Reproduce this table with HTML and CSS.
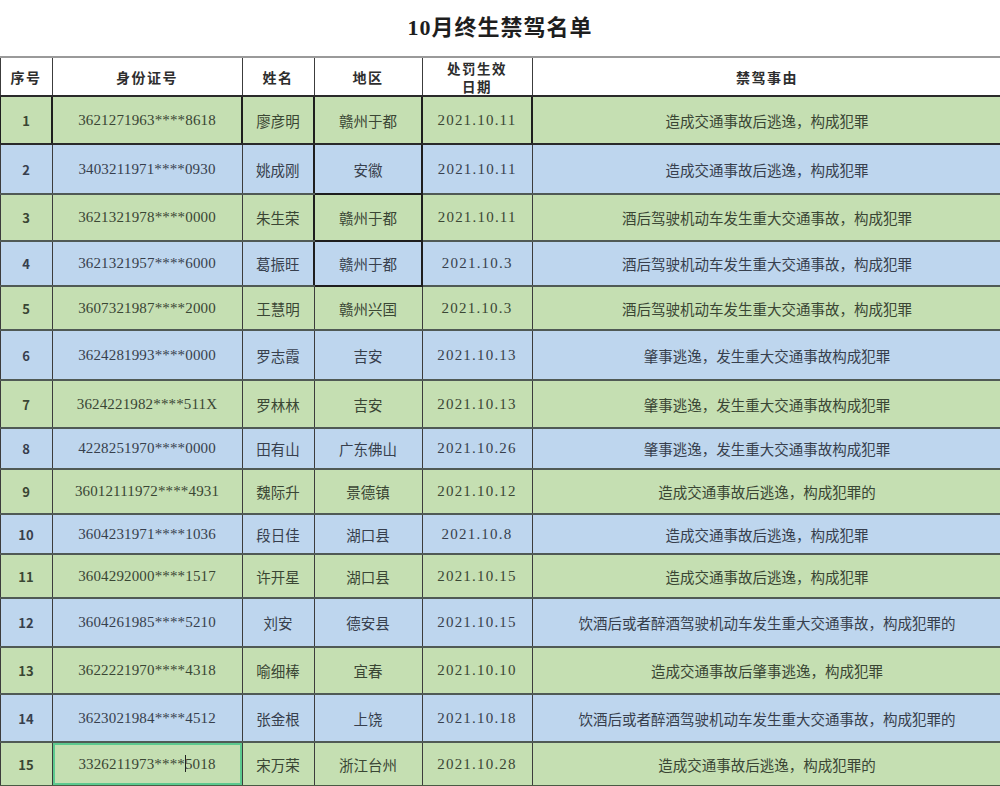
FILE: index.html
```html
<!DOCTYPE html>
<html lang="zh-CN">
<head>
<meta charset="utf-8">
<title>10月终生禁驾名单</title>
<link rel="stylesheet" href="styles.css">
</head>
<body>
<div class="page">
  <h1 class="title">10月终生禁驾名单</h1>
  <table class="list">
    <colgroup>
      <col class="c-no"><col class="c-id"><col class="c-name"><col class="c-area"><col class="c-date"><col class="c-reason">
    </colgroup>
    <thead>
      <tr class="h39">
        <th>序号</th><th>身份证号</th><th>姓名</th><th>地区</th><th class="two">处罚生效<br>日期</th><th>禁驾事由</th>
      </tr>
    </thead>
    <tbody>
      <tr class="g h48 first"><td class="no">1</td><td class="id">3621271963****8618</td><td class="cn">廖彦明</td><td class="cn">赣州于都</td><td class="dt">2021.10.11</td><td class="cn">造成交通事故后逃逸，构成犯罪</td></tr>
      <tr class="b h50"><td class="no">2</td><td class="id">3403211971****0930</td><td class="cn">姚成刚</td><td class="cn box">安徽</td><td class="dt">2021.10.11</td><td class="cn">造成交通事故后逃逸，构成犯罪</td></tr>
      <tr class="g h47"><td class="no">3</td><td class="id">3621321978****0000</td><td class="cn">朱生荣</td><td class="cn box">赣州于都</td><td class="dt">2021.10.11</td><td class="cn">酒后驾驶机动车发生重大交通事故，构成犯罪</td></tr>
      <tr class="b h45"><td class="no">4</td><td class="id">3621321957****6000</td><td class="cn">葛振旺</td><td class="cn box">赣州于都</td><td class="dt">2021.10.3</td><td class="cn">酒后驾驶机动车发生重大交通事故，构成犯罪</td></tr>
      <tr class="g h44"><td class="no">5</td><td class="id">3607321987****2000</td><td class="cn">王慧明</td><td class="cn">赣州兴国</td><td class="dt">2021.10.3</td><td class="cn">酒后驾驶机动车发生重大交通事故，构成犯罪</td></tr>
      <tr class="b h50"><td class="no">6</td><td class="id">3624281993****0000</td><td class="cn">罗志霞</td><td class="cn">吉安</td><td class="dt">2021.10.13</td><td class="cn">肇事逃逸，发生重大交通事故构成犯罪</td></tr>
      <tr class="g h48"><td class="no">7</td><td class="id">3624221982****511X</td><td class="cn">罗林林</td><td class="cn">吉安</td><td class="dt">2021.10.13</td><td class="cn">肇事逃逸，发生重大交通事故构成犯罪</td></tr>
      <tr class="b h41"><td class="no">8</td><td class="id">4228251970****0000</td><td class="cn">田有山</td><td class="cn">广东佛山</td><td class="dt">2021.10.26</td><td class="cn">肇事逃逸，发生重大交通事故构成犯罪</td></tr>
      <tr class="g h45"><td class="no">9</td><td class="id">36012111972****4931</td><td class="cn">魏际升</td><td class="cn">景德镇</td><td class="dt">2021.10.12</td><td class="cn">造成交通事故后逃逸，构成犯罪的</td></tr>
      <tr class="b h40"><td class="no">10</td><td class="id">3604231971****1036</td><td class="cn">段日佳</td><td class="cn">湖口县</td><td class="dt">2021.10.8</td><td class="cn">造成交通事故后逃逸，构成犯罪</td></tr>
      <tr class="g h44"><td class="no">11</td><td class="id">3604292000****1517</td><td class="cn">许开星</td><td class="cn">湖口县</td><td class="dt">2021.10.15</td><td class="cn">造成交通事故后逃逸，构成犯罪</td></tr>
      <tr class="b h49"><td class="no">12</td><td class="id">3604261985****5210</td><td class="cn">刘安</td><td class="cn">德安县</td><td class="dt">2021.10.15</td><td class="cn">饮酒后或者醉酒驾驶机动车发生重大交通事故，构成犯罪的</td></tr>
      <tr class="g h47"><td class="no">13</td><td class="id">3622221970****4318</td><td class="cn">喻细棒</td><td class="cn">宜春</td><td class="dt">2021.10.10</td><td class="cn">造成交通事故后肇事逃逸，构成犯罪</td></tr>
      <tr class="b h48"><td class="no">14</td><td class="id">3623021984****4512</td><td class="cn">张金根</td><td class="cn">上饶</td><td class="dt">2021.10.18</td><td class="cn">饮酒后或者醉酒驾驶机动车发生重大交通事故，构成犯罪的</td></tr>
      <tr class="g h44 last"><td class="no">15</td><td class="id sel">3326211973****<span class="caret"></span>5018</td><td class="cn">宋万荣</td><td class="cn">浙江台州</td><td class="dt">2021.10.28</td><td class="cn">造成交通事故后逃逸，构成犯罪的</td></tr>
    </tbody>
  </table>
</div>
</body>
</html>
```

FILE: styles.css
```css
html, body {
  margin: 0;
  padding: 0;
  background: #ffffff;
}
body {
  width: 1000px;
  height: 786px;
  overflow: hidden;
}
.page {
  width: 1000px;
}
.title {
  margin: 0;
  height: 56px;
  line-height: 56px;
  text-align: center;
  font-family: "Liberation Serif", "Noto Sans CJK SC", serif;
  font-size: 22px;
  font-weight: 700;
  color: #1e1e1e;
  letter-spacing: 1px;
}
.list {
  width: 1004px;
  margin-left: -1px;
  border-collapse: collapse;
  table-layout: fixed;
  font-family: "Liberation Serif", "Noto Sans CJK SC", serif;
  font-size: 15px;
  color: #394038;
}
.c-no { width: 52px; }
.c-id { width: 190px; }
.c-name { width: 72px; }
.c-area { width: 108px; }
.c-date { width: 110px; }
.list th, .list td {
  border-left: 1px solid #3c3c3c;
  border-right: 1px solid #3c3c3c;
  border-top: 2px solid #505a55;
  border-bottom: 2px solid #505a55;
  padding: 0;
  text-align: center;
  vertical-align: middle;
  white-space: nowrap;
}
.list th {
  background: #ffffff;
  font-family: "Noto Sans CJK SC", sans-serif;
  font-weight: 700;
  font-size: 14px;
  letter-spacing: 1.5px;
  color: #2e2e2e;
  border-top: 2px solid #9a9a9a;
  border-bottom: 2px solid #2a2a2a;
}
.list th.two {
  line-height: 18px;
  font-size: 13.5px;
}
.list td.id {
  letter-spacing: 0.15px;
}
.list td.dt {
  letter-spacing: 1.2px;
}
.list td.cn {
  font-family: "Noto Sans CJK SC", serif;
  font-size: 14.5px;
}
.list td.no {
  font-family: "Noto Sans CJK SC", sans-serif;
  font-weight: 700;
  font-size: 13px;
}
.g td { background: #c5dfb2; color: #3a4634; }
.b td { background: #bed6ee; color: #373f4d; }
.first td {
  border-top: 2px solid #1e1e1e;
  border-bottom: 2px solid #2a2a2a;
  border-left: 2px solid #1e1e1e;
  border-right: 2px solid #1e1e1e;
}
.list td.box {
  border-left: 2px solid #1e1e1e;
  border-right: 2px solid #1e1e1e;
  border-bottom: 2px solid #1e1e1e;
}
.last td {
  border-bottom: 2px solid #4a5a44;
}
.list td.sel {
  box-shadow: inset 0 0 0 2px #5cc98f;
}
.caret {
  display: inline-block;
  width: 1px;
  height: 17px;
  background: #222;
  vertical-align: -3px;
  margin-right: -1px;
}
.h39 { height: 39px; }
.h40 { height: 40px; }
.h41 { height: 41px; }
.h44 { height: 44px; }
.h45 { height: 45px; }
.h47 { height: 47px; }
.h48 { height: 48px; }
.h49 { height: 49px; }
.h50 { height: 50px; }
```
